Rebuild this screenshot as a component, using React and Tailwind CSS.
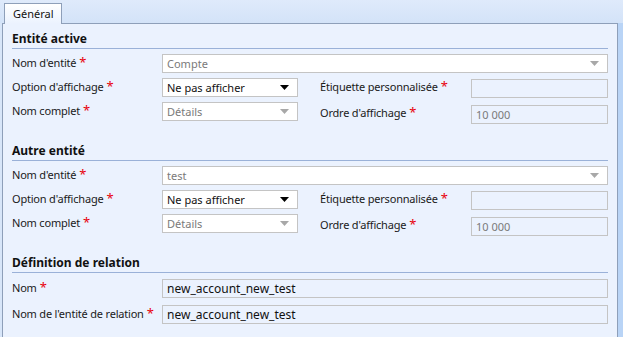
import React from 'react';

const font = { fontFamily: '"Noto Sans", "Open Sans", Arial, sans-serif' };

function Star() {
  return <span className="relative -top-[1px] ml-[3px] text-[13px] leading-none text-[#e8000b]">*</span>;
}

function Label({ children, className = '' }) {
  return (
    <div className={`flex items-center whitespace-nowrap text-[11px] tracking-[-0.2px] text-[#1a1a1a] ${className}`}>
      {children}
      <Star />
    </div>
  );
}

function Arrow({ muted }) {
  return (
    <svg width="9" height="5" viewBox="0 0 9 5" className="shrink-0">
      <path d="M0 0H9L4.5 5Z" fill={muted ? '#a8a8a8' : '#000'} />
    </svg>
  );
}

function Box({ value, className = '', tone = 'white', text = 'dark', arrow }) {
  const bg = tone === 'white' ? 'bg-white' : 'bg-[#ebf2fe]';
  const color = text === 'dark' ? 'text-[#111]' : 'text-[#7a7a7a]';
  return (
    <div
      className={`flex h-[19px] items-center justify-between border border-[#c4c4c4] pl-[4px] pr-[8px] text-[11px] ${bg} ${color} ${className}`}
    >
      <span className="leading-none">{value}</span>
      {arrow && <Arrow muted={arrow === 'muted'} />}
    </div>
  );
}

function Header({ title }) {
  return (
    <div className="flex h-[19px] items-start border-b border-[#9ab1d8] text-[12px] font-bold leading-[17px] text-[#111]">
      {title}
    </div>
  );
}

function EntitySection({ title, name }) {
  return (
    <div>
      <Header title={title} />
      <div className="flex flex-col gap-[5px] pt-[5px]">
        <div className="flex h-[19px]">
          <Label className="w-[150px]">Nom d'entité</Label>
          <Box value={name} className="flex-1" text="muted" arrow="muted" />
        </div>
        <div className="flex h-[19px]">
          <Label className="w-[150px]">Option d'affichage</Label>
          <Box value="Ne pas afficher" className="w-[136px]" arrow="dark" />
          <Label className="ml-[22px] w-[151px]">Étiquette personnalisée</Label>
          <Box value="" className="mt-[1px] flex-1" tone="panel" />
        </div>
        <div className="flex h-[19px]">
          <Label className="w-[150px]">Nom complet</Label>
          <Box value="Détails" className="w-[136px]" text="muted" arrow="muted" />
          <Label className="ml-[22px] mt-[3px] w-[151px]">Ordre d'affichage</Label>
          <Box value="10 000" className="mt-[3px] flex-1" tone="panel" text="muted" />
        </div>
      </div>
    </div>
  );
}

export default function App() {
  return (
    <div style={font} className="flex h-[337px] w-[623px] flex-col overflow-hidden bg-[#d8e6f9]">
      {/* Tab strip */}
      <div className="flex h-[23px] shrink-0 items-end bg-gradient-to-b from-[#dfeafb] to-[#d3e3f8] pl-[4px]">
        <div className="relative z-10 -mb-px flex h-[21px] w-[58px] items-center border border-b-0 border-[#8e9fb9] bg-gradient-to-b from-[#ffffff] to-[#ebf2fe] pl-[8px] text-[11px] text-[#111]">
          Général
        </div>
      </div>

      <div className="flex flex-1">
        {/* Panel */}
        <div className="ml-[2px] w-[616px] flex-1 border border-b-0 border-[#8e9fb9] bg-[#ebf2fe] pl-[9px] pr-[9px] pt-[6px]">
          <EntitySection title="Entité active" name="Compte" />
          <div className="mt-[21px]">
            <EntitySection title="Autre entité" name="test" />
          </div>
          <div className="mt-[21px]">
            <Header title="Définition de relation" />
            <div className="flex flex-col gap-[7px] pt-[6px]">
              <div className="flex h-[19px]">
                <Label className="w-[150px]">Nom</Label>
                <Box value="new_account_new_test" className="flex-1 text-[12px]" tone="panel" />
              </div>
              <div className="flex h-[19px]">
                <Label className="w-[150px]">Nom de l'entité de relation</Label>
                <Box value="new_account_new_test" className="flex-1 text-[12px]" tone="panel" />
              </div>
            </div>
          </div>
        </div>
        <div className="w-[5px] shrink-0 bg-[#b9d4f6]" />
      </div>
    </div>
  );
}
